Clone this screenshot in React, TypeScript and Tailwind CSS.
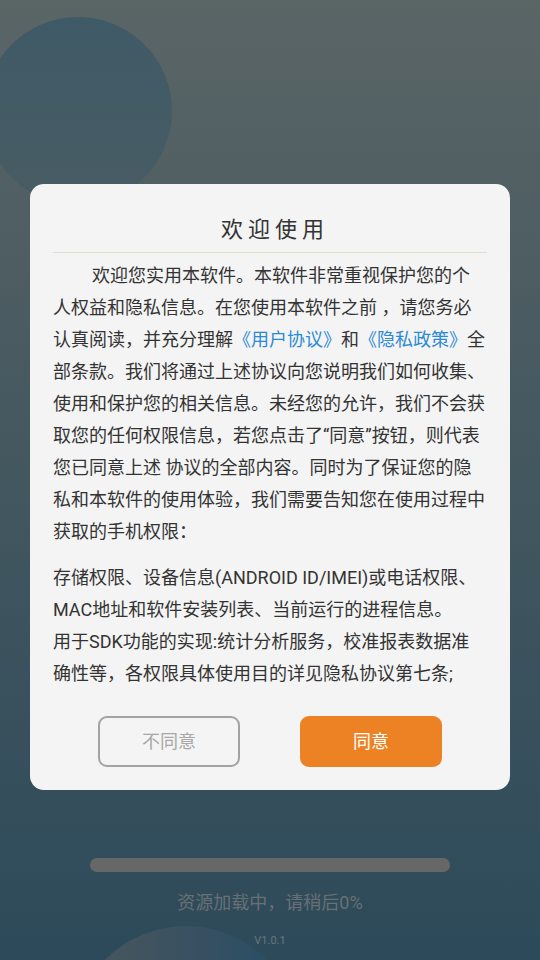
import React from 'react';

const font = { fontFamily: "Roboto, 'Noto Sans CJK SC', sans-serif" };

const intro: React.ReactNode[] = [
  '欢迎您实用本软件。本软件非常重视保护您的个',
  '人权益和隐私信息。在您使用本软件之前 ，请您务必',
  <>
    认真阅读，并充分理解<span className="text-[#2b8ad6]">《用户协议》</span>和
    <span className="text-[#2b8ad6]">《隐私政策》</span>全
  </>,
  '部条款。我们将通过上述协议向您说明我们如何收集、',
  '使用和保护您的相关信息。未经您的允许，我们不会获',
  '取您的任何权限信息，若您点击了“同意”按钮，则代表',
  '您已同意上述 协议的全部内容。同时为了保证您的隐',
  '私和本软件的使用体验，我们需要告知您在使用过程中',
  '获取的手机权限：',
];

const perms = [
  '存储权限、设备信息(ANDROID ID/IMEI)或电话权限、',
  'MAC地址和软件安装列表、当前运行的进程信息。',
  '用于SDK功能的实现:统计分析服务，校准报表数据准',
  '确性等，各权限具体使用目的详见隐私协议第七条;',
];

export default function App() {
  return (
    <div
      className="relative w-[540px] h-[960px] overflow-hidden bg-linear-to-b from-[#5a6566] via-[#43575f] to-[#2d4a5a]"
      style={font}
    >
      {/* decorative circles */}
      <div className="absolute left-[-16px] top-[17px] w-[188px] h-[188px] rounded-full bg-linear-to-b from-[#3f5a67] to-[#485c64]" />
      <div className="absolute left-[72px] top-[926px] w-[228px] h-[228px] rounded-full bg-linear-to-r from-[#4a585c] via-[#3a5161] to-[#224d66]" />

      <div className="relative flex flex-col items-center">
        {/* dialog */}
        <div className="mt-[184px] w-[480px] rounded-[14px] bg-[#f4f4f4] px-[23px] pb-[23px]">
          <h1 className="pt-[31px] pl-[10px] text-center text-[22px] leading-[30px] tracking-[5px] text-[#333]">
            欢迎使用
          </h1>
          <div className="mt-[7px] h-px bg-[#e2dbd0]" />

          <div className="mt-[7px] text-[18px] leading-[32px] text-[#333]">
            {intro.map((line, i) => (
              <div key={i} className={`whitespace-nowrap ${i === 0 ? 'pl-[39px]' : ''}`}>
                {line}
              </div>
            ))}
          </div>

          <div className="mt-[14px] text-[18px] leading-[32px] text-[#333]">
            {perms.map((line, i) => (
              <div key={i} className="whitespace-nowrap">
                {line}
              </div>
            ))}
          </div>

          <div className="mt-[26px] flex justify-center gap-[60px]">
            <button className="w-[142px] h-[51px] rounded-[9px] border-2 border-[#a3a3a3] text-[18px] text-[#a8a8a8]">
              不同意
            </button>
            <button className="w-[142px] h-[51px] rounded-[9px] bg-[#ec8224] text-[18px] text-white">
              同意
            </button>
          </div>
        </div>

        {/* loading */}
        <div className="mt-[68px] w-[360px] h-[14px] rounded-full bg-[#676767]" />
        <div className="mt-[19px] text-[18px] leading-[24px] text-[#687074]">资源加载中，请稍后0%</div>
        <div className="mt-[19px] text-[11px] leading-[14px] text-[#6c757a]">V1.0.1</div>
      </div>
    </div>
  );
}
